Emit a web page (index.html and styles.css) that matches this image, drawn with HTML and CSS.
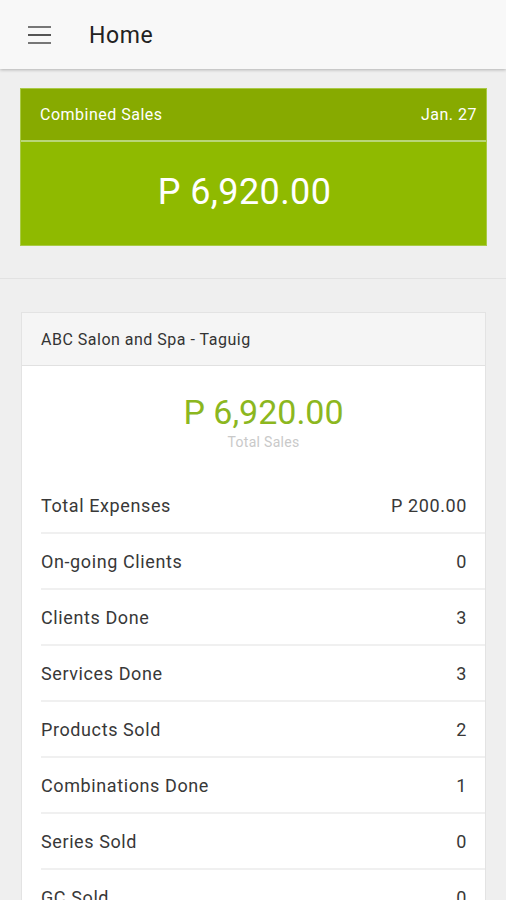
FILE: index.html
```html
<!DOCTYPE html>
<html lang="en">
<head>
    <meta charset="UTF-8">
    <meta name="viewport" content="width=device-width, initial-scale=1.0">
    <title>Home</title>
    <link rel="stylesheet" href="styles.css">
</head>
<body>
    <header class="appbar">
        <svg class="menu-icon" width="24" height="20" viewBox="0 0 24 20">
            <rect x="0" y="1" width="23" height="2" fill="#777"/>
            <rect x="0" y="9" width="23" height="2" fill="#555"/>
            <rect x="0" y="17" width="23" height="2" fill="#777"/>
        </svg>
        <h1>Home</h1>
    </header>

    <section class="summary">
        <div class="combined">
            <div class="combined-head">
                <span>Combined Sales</span>
                <span class="date">Jan. 27</span>
            </div>
            <div class="combined-body">P 6,920.00</div>
        </div>
    </section>

    <section class="branches">
        <div class="branch">
            <div class="branch-head">ABC Salon and Spa - Taguig</div>
            <div class="branch-total">
                <div class="amount">P 6,920.00</div>
                <div class="caption">Total Sales</div>
            </div>
            <ul class="stats">
                <li><span>Total Expenses</span><span>P 200.00</span></li>
                <li><span>On-going Clients</span><span>0</span></li>
                <li><span>Clients Done</span><span>3</span></li>
                <li><span>Services Done</span><span>3</span></li>
                <li><span>Products Sold</span><span>2</span></li>
                <li><span>Combinations Done</span><span>1</span></li>
                <li><span>Series Sold</span><span>0</span></li>
                <li><span>GC Sold</span><span>0</span></li>
            </ul>
        </div>
    </section>
</body>
</html>
```

FILE: styles.css
```css
* { margin: 0; padding: 0; box-sizing: border-box; }
body {
    font-family: Roboto, 'Noto Sans', sans-serif;
    background: #efefef;
    color: #333;
    height: 900px;
    overflow: hidden;
}
.appbar {
    height: 69px;
    background: #f8f8f8;
    display: flex;
    align-items: center;
    padding-left: 28px;
    box-shadow: 0 1px 3px rgba(0, 0, 0, 0.25);
    position: relative;
    z-index: 1;
}
.menu-icon { margin-right: 37px; }
.appbar h1 {
    font-size: 23px;
    font-weight: 400;
    color: #222;
    letter-spacing: 0.6px;
    margin-top: 1px;
}
.summary {
    padding: 19px 19px 32px 20px;
    border-bottom: 1px solid #e2e2e2;
}
.combined {
    border: 1px solid #a9ca45;
    color: white;
}
.combined-head {
    height: 53px;
    background: #87aa00;
    border-bottom: 2px solid #b9d678;
    display: flex;
    justify-content: space-between;
    align-items: center;
    padding: 0 9px 0 19px;
    font-size: 16px;
    letter-spacing: 0.5px;
}
.combined-body {
    height: 103px;
    background: #8fba00;
    display: flex;
    align-items: center;
    justify-content: center;
    font-size: 36px;
    letter-spacing: 0.4px;
    padding: 0 18px 4px 0;
}
.branches { padding: 33px 20px 0 21px; }
.branch {
    background: white;
    border: 1px solid #e3e3e3;
    border-bottom: none;
}
.branch-head {
    height: 53px;
    background: #f5f5f5;
    border-bottom: 1px solid #e1e1e1;
    display: flex;
    align-items: center;
    padding-left: 19px;
    font-size: 16px;
    letter-spacing: 0.5px;
    color: #333;
}
.branch-total {
    height: 112px;
    text-align: center;
    padding: 26px 0 0 20px;
}
.amount {
    font-size: 34px;
    color: #8cb71f;
    line-height: 40px;
}
.caption {
    font-size: 14px;
    color: #c9c9c9;
    line-height: 16px;
    letter-spacing: 0.3px;
    margin-top: 2px;
}
.stats { list-style: none; }
.stats li {
    height: 56px;
    margin-left: 19px;
    padding-right: 18px;
    border-bottom: 2px solid #f0f0f0;
    display: flex;
    justify-content: space-between;
    align-items: center;
    font-size: 18px;
    letter-spacing: 0.6px;
    color: #383838;
}
```
